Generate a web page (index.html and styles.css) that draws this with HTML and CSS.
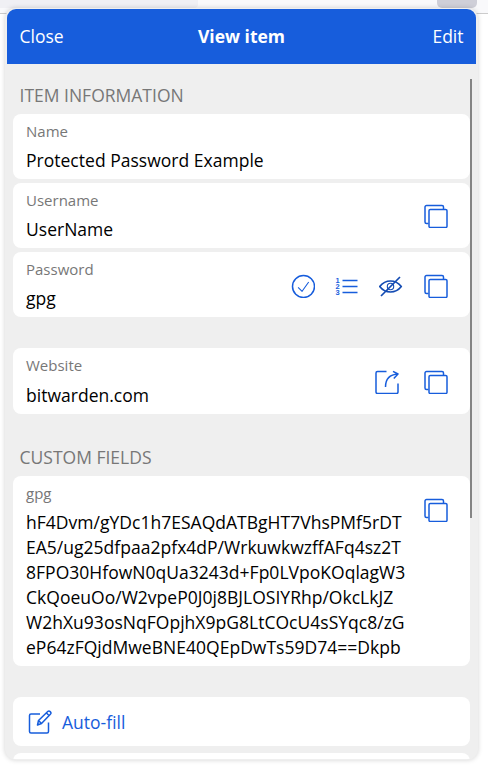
FILE: index.html
```html
<!DOCTYPE html>
<html lang="en">
<head>
<meta charset="utf-8">
<title>View item</title>
<link rel="stylesheet" href="styles.css">
</head>
<body>
<svg width="0" height="0" class="defs">
  <symbol id="copy" viewBox="0 0 24 24"><path d="M4.500 19.500H2.500a1.500 1.500 0 0 1-1.500-1.500V3a1.500 1.500 0 0 1 1.500-1.500H18A1.500 1.500 0 0 1 19.500 3v2"/><rect x="5" y="5.500" width="18" height="18" rx="1.300"/></symbol>
</svg>
<div class="tab tab-left"></div>
<div class="tab tab-right"></div>
<main class="popup">
  <header class="header"><span>Close</span><h1>View item</h1><span class="edit">Edit</span></header>
  <div class="content">
    <h2>ITEM INFORMATION</h2>
    <section class="group">
      <div class="card"><div class="text"><div class="label">Name</div><div class="value">Protected Password Example</div></div></div>
      <div class="card username"><div class="text"><div class="label">Username</div><div class="value">UserName</div></div>
        <div class="actions"><svg class="icon copy"><use href="#copy"/></svg></div></div>
      <div class="card"><div class="text"><div class="label">Password</div><div class="value">gpg</div></div>
        <div class="actions">
          <svg class="icon" viewBox="0 0 24 24"><circle cx="12.500" cy="12.500" r="11"/><path class="thin" d="M7.100 13.300l4 4L17.700 8"/></svg>
          <svg class="icon" viewBox="0 0 24 24"><path d="M7.500 6.500h15M7.500 12.500h15M7.500 18.500h15"/><g class="digits"><text x="0.500" y="8.700">1</text><text x="0.500" y="14.900">2</text><text x="0.500" y="21.100">3</text></g></svg>
          <svg class="icon dark" viewBox="0 0 24 24"><path d="M.7 12.500C3.700 8.700 7.500 7 11.500 7S19.300 8.700 22.300 12.500C19.300 16.300 15.500 18 11.500 18S3.700 16.300 .7 12.500ZM2 22L21 3"/><circle class="thin" cx="11.500" cy="12.500" r="3.200"/></svg>
          <svg class="icon copy"><use href="#copy"/></svg>
        </div></div>
    </section>
    <section class="group website">
      <div class="card"><div class="text"><div class="label">Website</div><div class="value">bitwarden.com</div></div>
        <div class="actions">
          <svg class="icon" viewBox="0 0 24 24"><path d="M11.500 1.500H2.500Q1 1.500 1 3v19Q1 23.500 2.500 23.500h19q1.500 0 1.500-1.500V13.500M10.500 17C10.500 9.500 14.500 4.500 23 4M18 1.300l5 2.700-4.200 4.500"/></svg>
          <svg class="icon copy"><use href="#copy"/></svg>
        </div></div>
    </section>
    <h2 class="custom-title">CUSTOM FIELDS</h2>
    <section class="group">
      <div class="card custom"><div class="text"><div class="label">gpg</div><div class="value">hF4Dvm/gYDc1h7ESAQdATBgHT7VhsPMf5rDT<br>EA5/ug25dfpaa2pfx4dP/WrkuwkwzffAFq4sz2T<br>8FPO30HfowN0qUa3243d+Fp0LVpoKOqlagW3<br>CkQoeuOo/W2vpeP0J0j8BJLOSIYRhp/OkcLkJZ<br>W2hXu93osNqFOpjhX9pG8LtCOcU4sSYqc8/zG<br>eP64zFQjdMweBNE40QEpDwTs59D74==Dkpb</div></div>
        <div class="actions"><svg class="icon copy"><use href="#copy"/></svg></div></div>
    </section>
    <section class="group fill">
      <div class="card autofill"><svg class="icon" viewBox="0 0 24 24"><path d="M12 4H3Q1.500 4 1.500 5.500v16Q1.500 23 3 23h16q1.500 0 1.500-1.500V12.500M9.500 15l1-4.500L20 1.300q1-.8 2.200.3 1.300 1.200.4 2.300L13.500 13.500zM18.500 3l2.700 2.700M10.500 10.500l3 3"/></svg><span class="fill-label">Auto-fill</span></div>
      <div class="card next"></div>
    </section>
    <div class="scrollbar"></div>
  </div>
</main>
</body>
</html>
```
FILE: styles.css
```css
* { box-sizing: border-box; }
body {
  margin: 0;
  width: 488px;
  height: 767px;
  overflow: hidden;
  position: relative;
  padding: 8px 0 0 5px;
  font: 17.5px/25px "Open Sans", sans-serif;
  color: #000;
  background: linear-gradient(#f9f9fb 13px, #ccc 13px, #ccc 14px, #fff 14px);
}
.defs { position: absolute; }
.tab { position: absolute; top: 0; height: 8px; }
.tab-left { left: 0; width: 198px; background: #f0f0f4; border-radius: 0 0 4px 0; }
.tab-right { left: 437px; width: 40px; background: #cfcfd8; border-radius: 0 0 5px 5px; }
.popup {
  position: relative;
  width: 473px;
  height: 752px;
  padding: 1px 2px;
  background: #efefef;
  border-radius: 11px;
  box-shadow: 0 0 5px rgba(0, 0, 0, .18);
}
.header {
  display: grid;
  grid-template-columns: 1fr auto 1fr;
  align-items: center;
  height: 55px;
  padding: 0 12.5px;
  color: #fff;
  background: #175ddc;
  border-radius: 9px 9px 0 0;
}
.header h1 { margin: 0; font-size: 17.5px; font-weight: 700; }
.edit { text-align: right; }
.content { position: relative; height: 695px; padding: 19px 6px 0; overflow: hidden; border-radius: 0 0 8px 8px; }
h2 { margin: 0; padding: 0 6.5px; height: 31px; font-size: 17.5px; font-weight: 400; color: #777; }
.group { display: flex; flex-direction: column; gap: 4px; }
.website { margin-top: 31px; }
.custom-title { margin-top: 31px; }
.fill { margin-top: 31px; gap: 7px; }
.card {
  display: flex;
  align-items: center;
  justify-content: space-between;
  height: 65px;
  padding: 0 22px 0 13px;
  background: #fff;
  border-radius: 8px;
}
.website .card { height: 66px; }
.website .label { height: 28px; }
.text { align-self: flex-start; padding-top: 7px; }
.label { height: 27px; font-size: 15px; line-height: 21px; color: #777; }
.value { letter-spacing: .02px; }
.actions { display: flex; gap: 20px; padding-top: 3px; }
.username .actions { padding-top: 1px; }
.website .actions { gap: 24px; padding-top: 2px; }
.copy { margin-left: 1px; }
.icon { width: 24px; height: 24px; fill: none; stroke: #175ddc; stroke-width: 1.5; stroke-linejoin: round; }
.thin { stroke-width: 1.1; }
.dark { stroke: #134bb3; stroke-width: 1.7; }
.digits { font: 700 7.5px "Liberation Sans", sans-serif; fill: #175ddc; stroke: none; }
.custom { height: 190px; align-items: flex-start; }
.custom .actions { padding-top: 22px; }
.autofill { height: 49px; justify-content: flex-start; gap: 10px; padding-left: 15px; color: #175ddc; }
.fill-label { padding-top: 2px; }
.next { height: 49px; flex-shrink: 0; }
.scrollbar { position: absolute; top: 15px; right: 4px; width: 2px; height: 439px; background: #858585; }
```
